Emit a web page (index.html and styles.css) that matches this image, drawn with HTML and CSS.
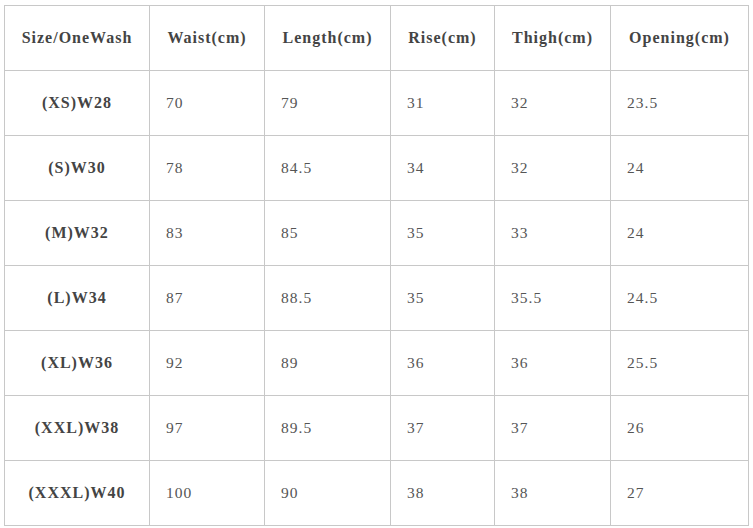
FILE: index.html
```html
<!DOCTYPE html>
<html>
<head>
<meta charset="utf-8">
<link rel="stylesheet" href="styles.css">
</head>
<body>
<div class="wrap">
<table class="size-table">
  <colgroup>
    <col class="c1"><col class="c2"><col class="c3"><col class="c4"><col class="c5"><col class="c6">
  </colgroup>
  <thead>
    <tr><th>Size/OneWash</th><th>Waist(cm)</th><th>Length(cm)</th><th>Rise(cm)</th><th>Thigh(cm)</th><th>Opening(cm)</th></tr>
  </thead>
  <tbody>
    <tr><th>(XS)W28</th><td>70</td><td>79</td><td>31</td><td>32</td><td>23.5</td></tr>
    <tr><th>(S)W30</th><td>78</td><td>84.5</td><td>34</td><td>32</td><td>24</td></tr>
    <tr><th>(M)W32</th><td>83</td><td>85</td><td>35</td><td>33</td><td>24</td></tr>
    <tr><th>(L)W34</th><td>87</td><td>88.5</td><td>35</td><td>35.5</td><td>24.5</td></tr>
    <tr><th>(XL)W36</th><td>92</td><td>89</td><td>36</td><td>36</td><td>25.5</td></tr>
    <tr><th>(XXL)W38</th><td>97</td><td>89.5</td><td>37</td><td>37</td><td>26</td></tr>
    <tr><th>(XXXL)W40</th><td>100</td><td>90</td><td>38</td><td>38</td><td>27</td></tr>
  </tbody>
</table>
</div>
</body>
</html>
```
FILE: styles.css
```css
html, body { margin: 0; padding: 0; background: #fff; }
.wrap { padding: 5px 0 0 4px; }
.size-table {
  border-collapse: collapse;
  table-layout: fixed;
  width: 744px;
  font-family: "Liberation Serif", "Times New Roman", serif;
  color: #444;
}
.c1 { width: 145px; }
.c2 { width: 115px; }
.c3 { width: 126px; }
.c4 { width: 104px; }
.c5 { width: 116px; }
.c6 { width: 138px; }
.size-table th, .size-table td {
  border: 1px solid #c8c8c8;
  height: 65px;
  padding: 0;
  vertical-align: middle;
  box-sizing: border-box;
}
.size-table th {
  font-weight: bold;
  font-size: 16px;
  letter-spacing: 1px;
  text-align: center;
  color: #444;
}
.size-table td {
  font-size: 15.5px;
  letter-spacing: 1px;
  text-align: left;
  padding-left: 16px;
  color: #555;
}
```
